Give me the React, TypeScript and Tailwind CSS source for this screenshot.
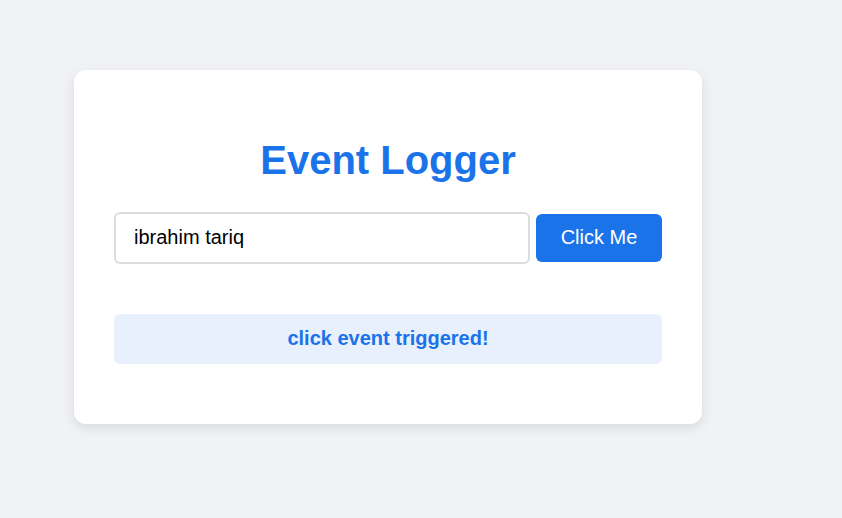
import React from "react";

export default function App() {
  return (
    <div className="min-h-[518px] w-full bg-[#f0f2f5] pl-[74px] pt-[70px]" style={{ fontFamily: '"Liberation Sans", Arial, sans-serif' }}>
      <div className="w-[628px] rounded-[12px] bg-white px-[40px] pt-[40px] pb-[60px] shadow-[0_4px_12px_rgba(0,0,0,0.1)]">
        <h1 className="mt-[27px] mb-[29px] text-center text-[40px] leading-[46px] font-bold text-[#1a73e8]">Event Logger</h1>
        <div className="flex items-center gap-[6px]">
          <input
            className="h-[52px] w-[416px] rounded-[6px] border-2 border-[#dddddd] px-[18px] pb-[2px] text-[20px] text-black outline-none"
            defaultValue="ibrahim tariq"
          />
          <button className="h-[48px] w-[126px] rounded-[6px] bg-[#1a73e8] pb-[2px] text-[20px] text-white">Click Me</button>
        </div>
        <div className="mt-[50px] flex h-[50px] items-center justify-center rounded-[6px] bg-[#e8f0fe] pb-[3px] text-[20px] font-bold text-[#1a73e8]">
          click event triggered!
        </div>
      </div>
    </div>
  );
}
